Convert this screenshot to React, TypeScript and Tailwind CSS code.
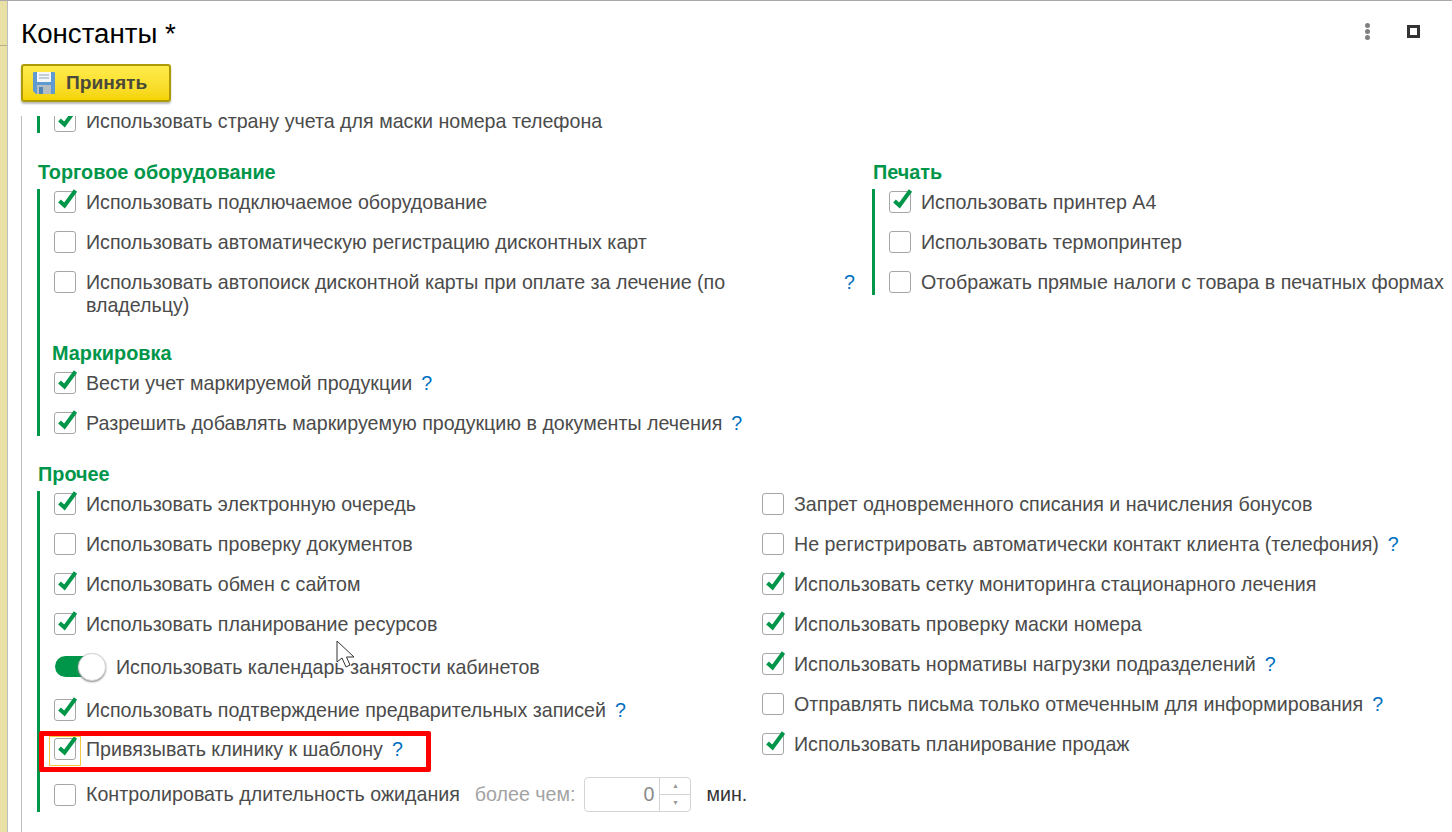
import { ReactNode } from 'react';

const Check = () => (
  <svg className="absolute left-[2px] top-[-3px]" width="21" height="21" viewBox="0 0 21 21" fill="none">
    <path d="M2.5 12 L7.5 16.5 L18.5 1.5" stroke="#00964a" strokeWidth="4" strokeLinejoin="miter" />
  </svg>
);

const Box = ({ checked }: { checked?: boolean }) => (
  <span className="relative block h-[22px] w-[22px] shrink-0 rounded-[3px] border border-[#a6a6a6] bg-white">
    {checked && <Check />}
  </span>
);

const Hint = () => <span className="ml-[9px] text-[#0070c0]">?</span>;

const Row = ({ checked, hint, text }: { checked?: boolean; hint?: boolean; text: string }) => (
  <div className="flex min-h-[26px] items-start gap-[10px] pt-[2px]">
    <Box checked={checked} />
    <p className="leading-[23px]">
      {text}
      {hint && <Hint />}
    </p>
  </div>
);

const Bar = ({ children, className }: { children: ReactNode; className?: string }) => (
  <div className={`flex flex-col gap-[14px] border-l-[3px] border-[#00964a] pl-[14px] ${className ?? ''}`}>{children}</div>
);

const Heading = ({ children, className }: { children: ReactNode; className?: string }) => (
  <h3 className={`text-[19.85px] leading-[24px] font-bold text-[#00964a] ${className ?? ''}`}>{children}</h3>
);

const rightRows = [
  { text: 'Запрет одновременного списания и начисления бонусов' },
  { text: 'Не регистрировать автоматически контакт клиента (телефония)', hint: true },
  { text: 'Использовать сетку мониторинга стационарного лечения', checked: true },
  { text: 'Использовать проверку маски номера', checked: true },
  { text: 'Использовать нормативы нагрузки подразделений', checked: true, hint: true },
  { text: 'Отправлять письма только отмеченным для информирования', hint: true },
  { text: 'Использовать планирование продаж', checked: true },
];

const FloppyIcon = () => (
  <svg width="22" height="22" viewBox="0 0 22 22">
    <path d="M1 0 H21 Q22 0 22 1 V21 Q22 22 21 22 H3 L0 19 V1 Q0 0 1 0 Z" fill="#5f9bd1" />
    <rect x="4" y="0" width="14" height="10" fill="#f4f6f8" />
    <path d="M6 3 H16 M6 6 H16" stroke="#8fa9c0" strokeWidth="1" />
    <rect x="4" y="13" width="14" height="9" fill="#b5bcc2" />
    <rect x="6" y="15" width="4" height="7" fill="#4f86b8" />
  </svg>
);

const App = () => {
  return (
    <div className="relative flex h-[832px] w-[1452px] overflow-hidden border-t border-[#a9a9a9] bg-white font-['Liberation_Sans',Arial,sans-serif] text-[19.65px] text-[#4b4b4b]">
      <div className="w-[8px] shrink-0 border-r border-[#bdbdbd] bg-[#e8e0a4]">
        <div className="h-[45px] border-b border-[#b5b08a]" />
      </div>

      <div className="flex min-w-0 flex-1 flex-col pl-[13px]">
        <header className="flex h-[63px] shrink-0 items-center justify-between pr-[32px]">
          <h1 className="pt-[2px] text-[27.7px] text-black">Константы *</h1>
          <div className="-mt-[2px] flex items-center gap-[37px]">
            <div className="flex flex-col gap-[1px]">
              <span className="h-[5px] w-[5px] rounded-full bg-[#808080]" />
              <span className="h-[5px] w-[5px] rounded-full bg-[#808080]" />
              <span className="h-[5px] w-[5px] rounded-full bg-[#808080]" />
            </div>
            <div className="h-[13px] w-[13px] border-[3px] border-[#333333]" />
          </div>
        </header>

        <button className="flex h-[38px] w-[150px] shrink-0 items-center gap-[12px] rounded-[3px] border-2 border-[#ad9a05] bg-gradient-to-b from-[#ffec4a] to-[#f5d400] pl-[10px] text-[19.2px] font-bold text-[#4a4a3a] shadow-[0_2px_2px_#bbbbbb]">
          <FloppyIcon />
          <span className="-ml-[1px] pt-[1px]">Принять</span>
        </button>

        <main className="mt-[14px] min-h-0 flex-1 overflow-hidden border-l border-[#bdbdbd] pl-[15px]">
          <Bar className="-mt-[8px] h-[25px]">
            <Row checked text="Использовать страну учета для маски номера телефона" />
          </Bar>

          <div className="mt-[27px] flex">
            <div className="w-[835px] shrink-0 pr-[15px]">
              <Heading className="pl-[1px]">Торговое оборудование</Heading>
              <Bar className="mt-[5px]">
                <Row checked text="Использовать подключаемое оборудование" />
                <Row text="Использовать автоматическую регистрацию дисконтных карт" />
                <div className="flex items-start justify-between">
                  <div className="w-[700px]">
                    <Row text="Использовать автопоиск дисконтной карты при оплате за лечение (по владельцу)" />
                  </div>
                  <span className="pr-[2px] leading-[27px] text-[#0070c0]">?</span>
                </div>
                <div className="mt-[10px] -mb-[9px] -ml-[2px]">
                  <Heading>Маркировка</Heading>
                </div>
                <Row checked hint text="Вести учет маркируемой продукции" />
                <Row checked hint text="Разрешить добавлять маркируемую продукцию в документы лечения" />
              </Bar>
            </div>
            <div className="min-w-0">
              <Heading className="pl-[1px]">Печать</Heading>
              <Bar className="mt-[5px] w-[600px]">
                <Row checked text="Использовать принтер А4" />
                <Row text="Использовать термопринтер" />
                <Row text="Отображать прямые налоги с товара в печатных формах" />
              </Bar>
            </div>
          </div>

          <Heading className="mt-[26px] pl-[1px]">Прочее</Heading>
          <div className="mt-[5px] flex">
            <Bar className="w-[725px] shrink-0 !gap-0">
              <Row checked text="Использовать электронную очередь" />
              <div className="mt-[14px]">
                <Row text="Использовать проверку документов" />
              </div>
              <div className="mt-[14px]">
                <Row checked text="Использовать обмен с сайтом" />
              </div>
              <div className="mt-[14px]">
                <Row checked text="Использовать планирование ресурсов" />
              </div>
              <div className="mt-[17px] flex h-[26px] items-center gap-[10px] pl-[1px]">
                <span className="relative block h-[28px] w-[51px] shrink-0">
                  <span className="absolute top-[3px] left-0 h-[21px] w-[46px] rounded-full bg-[#00964a]" />
                  <span className="absolute top-0 right-0 h-[28px] w-[28px] rounded-full border border-[#d6d6d6] bg-white shadow-[0_1px_2px_#8a8a8a]" />
                </span>
                <p className="pt-[1px]">Использовать календарь занятости кабинетов</p>
              </div>
              <div className="mt-[17px]">
                <Row checked hint text="Использовать подтверждение предварительных записей" />
              </div>
              <div className="relative mt-[13px]">
                <Row checked hint text="Привязывать клинику к шаблону" />
                <span className="absolute top-0 left-[-5px] h-[30px] w-[32px] border border-[#f5c842]" />
                <span className="absolute top-[-5px] left-[-15px] h-[41px] w-[392px] rounded-[2px] border-[5px] border-[#ff0000]" />
              </div>
              <div className="mt-[15px] flex h-[35px] items-center">
                <Box />
                <p className="ml-[10px]">Контролировать длительность ожидания</p>
                <span className="ml-[15px] text-[#a3a3a3]">более чем:</span>
                <div className="ml-[9px] flex h-[35px] w-[107px] rounded-[4px] border border-[#d4d4d4] text-[#8a8a8a]">
                  <span className="flex-1 pr-[5px] text-right leading-[33px]">0</span>
                  <div className="flex w-[31px] flex-col divide-y divide-[#d4d4d4] border-l border-[#d4d4d4] text-[#9a9a9a]">
                    <span className="flex flex-1 items-center justify-center text-[7px]">▲</span>
                    <span className="flex flex-1 items-center justify-center text-[7px]">▼</span>
                  </div>
                </div>
                <span className="ml-[15px] text-[#333333]">мин.</span>
              </div>
            </Bar>
            <div className="flex flex-col gap-[14px]">
              {rightRows.map((row, key) => (
                <Row key={key} checked={row.checked} hint={row.hint} text={row.text} />
              ))}
            </div>
          </div>
        </main>
      </div>

      {/* mouse pointer left in the screenshot */}
      <svg className="absolute top-[639px] left-[336px]" width="20" height="30" viewBox="0 0 20 30">
        <path d="M1 1 V22 L6 18 L10 27 L14 25 L10.5 17 L18 17 Z" fill="#ffffff" stroke="#333333" strokeWidth="1" />
      </svg>
    </div>
  );
};

export default App;
